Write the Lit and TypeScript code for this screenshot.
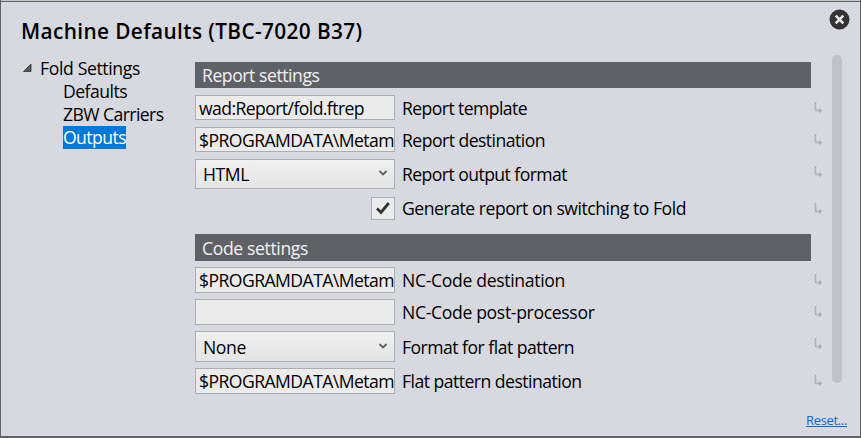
import { LitElement, html, css } from "lit";
import { customElement, property } from "lit/decorators.js";

// Single-line label whose tracking is adjusted so that it spans a given width.
@customElement("fit-text")
class FitText extends LitElement {
  @property() text = "";
  @property({ type: Number }) span = 0;
  static styles = css`
    :host { display: inline-block; white-space: pre; }
    span { display: inline-block; }
  `;
  updated() {
    const el = this.renderRoot.querySelector("span") as HTMLElement;
    el.style.letterSpacing = "0";
    const natural = el.getBoundingClientRect().width;
    el.style.letterSpacing = `${(this.span - natural) / this.text.length}px`;
  }
  render() { return html`<span>${this.text}</span>`; }
}

type Row = { kind: "input" | "select" | "check"; value: string; vw: number; label: string; lw: number; cls: string };

const report: Row[] = [
  { kind: "input", value: "wad:Report/fold.ftrep", vw: 165, label: "Report template", lw: 125, cls: "r1" },
  { kind: "input", value: "$PROGRAMDATA\\Metam", vw: 195, label: "Report destination", lw: 143, cls: "r2" },
  { kind: "select", value: "HTML", vw: 46, label: "Report output format", lw: 165, cls: "r3" },
  { kind: "check", value: "", vw: 0, label: "Generate report on switching to Fold", lw: 284, cls: "r4" },
];
const code: Row[] = [
  { kind: "input", value: "$PROGRAMDATA\\Metam", vw: 195, label: "NC-Code destination", lw: 163, cls: "c1" },
  { kind: "input", value: "", vw: 0, label: "NC-Code post-processor", lw: 192.5, cls: "c2" },
  { kind: "select", value: "None", vw: 43, label: "Format for flat pattern", lw: 172, cls: "c3" },
  { kind: "input", value: "$PROGRAMDATA\\Metam", vw: 195, label: "Flat pattern destination", lw: 179.5, cls: "c4" },
];

@customElement("app-root")
class AppRoot extends LitElement {
  static styles = css`
    :host { display: block; }
    * { box-sizing: border-box; }
    svg { display: block; }
    .window {
      width: 861px; height: 438px; overflow: hidden;
      border: 1px solid #626367; border-top: 0; border-bottom-width: 2px;
      background: repeating-linear-gradient(135deg, #d3d5dd 0 1.4142px, #dcdce4 1.4142px 2.8284px);
      color: #000; font: 17.6px/24px "Open Sans", "Noto Sans", sans-serif;
      display: flex; flex-direction: column;
    }
    .edge { height: 2px; flex: none; background: #c5cbc9; border-bottom: 1px solid #626367; }
    header { height: 53px; flex: none; display: flex; justify-content: space-between; padding: 15px 10px 0 20px; }
    .title { font-size: 20.8px; font-weight: 600; line-height: 28px; }
    .close { margin-top: -8px; width: 21px; height: 21px; }
    .body { display: flex; height: 345px; }
    nav { width: 194px; padding: 2px 0 0 20px; }
    .node { display: flex; align-items: center; height: 23px; line-height: 23px; }
    .arrow { width: 19px; padding-left: 2px; flex: none; }
    .child { margin-left: 42px; width: 63px; }
    .sel { background: #0078d7; color: #fff; line-height: 25px; }
    .form { width: 616px; padding-top: 7px; }
    .bar { background: #606166; color: #f1f1f5; height: 26px; line-height: 26px; padding-left: 7px; }
    .bar + .row { margin-top: 7px; }
    .row { display: flex; align-items: center; }
    .field { width: 200px; display: flex; align-items: center; border: 1px solid #abadb3; background: #ebebeb; white-space: nowrap; overflow: hidden; }
    .input { padding-left: 3px; height: 25px; }
    .select { height: 30px; padding: 0 6px 0 7px; justify-content: space-between; background: linear-gradient(#f0f0f0, #e4e4e4); }
    .select svg { margin-bottom: 2px; }
    .check { width: 24px; height: 23px; margin-left: 176px; justify-content: center; }
    .label { margin-left: 7px; }
    .tail { margin-left: auto; width: 12px; margin-right: -14px; }
    .r2, .r3, .r4 { margin-top: 7px; }
    .r3 .tail { margin-bottom: 4px; }
    .c3 .tail { margin-bottom: 6px; }
    .r4 .tail { margin-top: 2px; }
    .r4 + .bar { margin-top: 14px; }
    .bar.code { height: 27px; line-height: 28px; }
    .bar.code + .row { margin-top: 6px; }
    .c2, .c3, .c4 { margin-top: 6px; }
    .c1 .input, .c2 .input, .c4 .input { height: 26px; }
    .c3 .select { height: 31px; }
    .scroll { width: 10px; height: 328px; border-radius: 5px; background: rgb(170 171 174 / .5); margin-left: 21px; }
    footer { display: flex; justify-content: flex-end; padding: 10px 13px 0 0; font-size: 13px; line-height: 20px; }
    .reset { color: #0a6bd0; border-bottom: 1px solid #0a6bd0; height: 17px; }
  `;

  private row(r: Row) {
    const field =
      r.kind === "check"
        ? html`<div class="field check"><svg width="16" height="16" viewBox="0 0 16 16"><path d="M2 8.5 L6 12.5 L13.8 3" fill="none" stroke="#333" stroke-width="2.8"/></svg></div>`
        : html`<div class="field ${r.kind}">
            ${r.value ? html`<fit-text .text=${r.value} .span=${r.vw}></fit-text>` : ""}
            ${r.kind === "select" ? html`<svg width="10" height="10" viewBox="0 0 10 10"><path d="M1.5 3 L5 6.5 L8.5 3" fill="none" stroke="#606060" stroke-width="1.8"/></svg>` : ""}
          </div>`;
    return html`<div class="row ${r.cls}">
      ${field}<fit-text class="label" .text=${r.label} .span=${r.lw}></fit-text>
      <svg class="tail" width="12" height="14" viewBox="0 0 12 14"><path d="M2.5 1 V9.5 H8" fill="none" stroke="#b0b2b8" stroke-width="1.6"/><path d="M6 6.8 L9.4 9.5 L6 12.2 Z" fill="#adafb5"/></svg>
    </div>`;
  }

  render() {
    return html`<div class="window">
      <div class="edge"></div>
      <header>
        <fit-text class="title" .text=${"Machine Defaults (TBC-7020 B37)"} .span=${341.5}></fit-text>
        <svg class="close" viewBox="0 0 21 21"><circle cx="10.5" cy="10.5" r="10" fill="#333"/><path d="M6.7 6.7 L14.3 14.3 M14.3 6.7 L6.7 14.3" stroke="#e8e8ec" stroke-width="2.6"/></svg>
      </header>
      <div class="body">
        <nav>
          <div class="node"><div class="arrow"><svg width="9" height="9" viewBox="0 0 9 9"><path d="M8 0 V7.5 H0.5 Z" fill="#595959" stroke="#303030" stroke-width=".8"/></svg></div><fit-text .text=${"Fold Settings"} .span=${100}></fit-text></div>
          <div class="node child"><fit-text .text=${"Defaults"} .span=${64}></fit-text></div>
          <div class="node child"><fit-text .text=${"ZBW Carriers"} .span=${100.5}></fit-text></div>
          <div class="node child sel"><fit-text .text=${"Outputs"} .span=${63}></fit-text></div>
        </nav>
        <div class="form">
          <div class="bar"><fit-text .text=${"Report settings"} .span=${117.5}></fit-text></div>
          ${report.map((r) => this.row(r))}
          <div class="bar code"><fit-text .text=${"Code settings"} .span=${106}></fit-text></div>
          ${code.map((r) => this.row(r))}
        </div>
        <div class="scroll"></div>
      </div>
      <footer><fit-text class="reset" .text=${"Reset..."} .span=${41}></fit-text></footer>
    </div>`;
  }
}
